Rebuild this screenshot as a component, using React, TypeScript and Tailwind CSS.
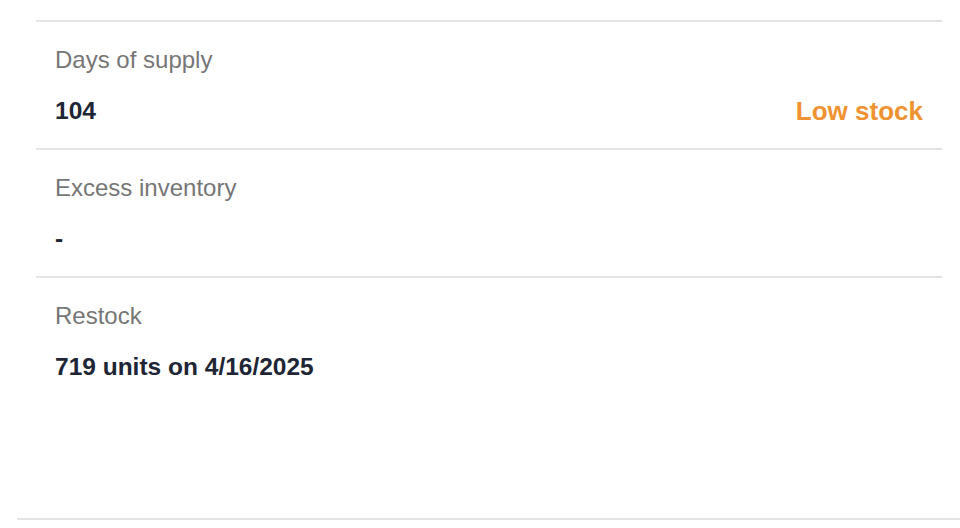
import React from 'react';

type Row = { label: string; value: string; status?: string };

const rows: Row[] = [
  { label: 'Days of supply', value: '104', status: 'Low stock' },
  { label: 'Excess inventory', value: '-' },
  { label: 'Restock', value: '719 units on 4/16/2025' },
];

export default function App() {
  return (
    <div
      className="flex h-[528px] w-full flex-col bg-white"
      style={{ fontFamily: '"Liberation Sans", Arial, sans-serif' }}
    >
      <div className="ml-[36px] mr-[18px] pt-[20px]">
        {rows.map((row) => (
          <div key={row.label} className="border-t-2 border-[#e3e3e3] px-[19px] pt-[20px] pb-[19px]">
            <div className="text-[24px] leading-[36px] text-[#767676]">{row.label}</div>
            <div className="mt-[15px] flex items-center justify-between font-bold leading-[36px]">
              <span className="text-[24.5px] text-[#1e2535]">{row.value}</span>
              {row.status && <span className="text-[26px] text-[#ef9231]">{row.status}</span>}
            </div>
          </div>
        ))}
      </div>
      <div className="flex-1" />
      <div className="mb-[8px] ml-[17px] border-t-2 border-[#e3e3e3]" />
    </div>
  );
}
